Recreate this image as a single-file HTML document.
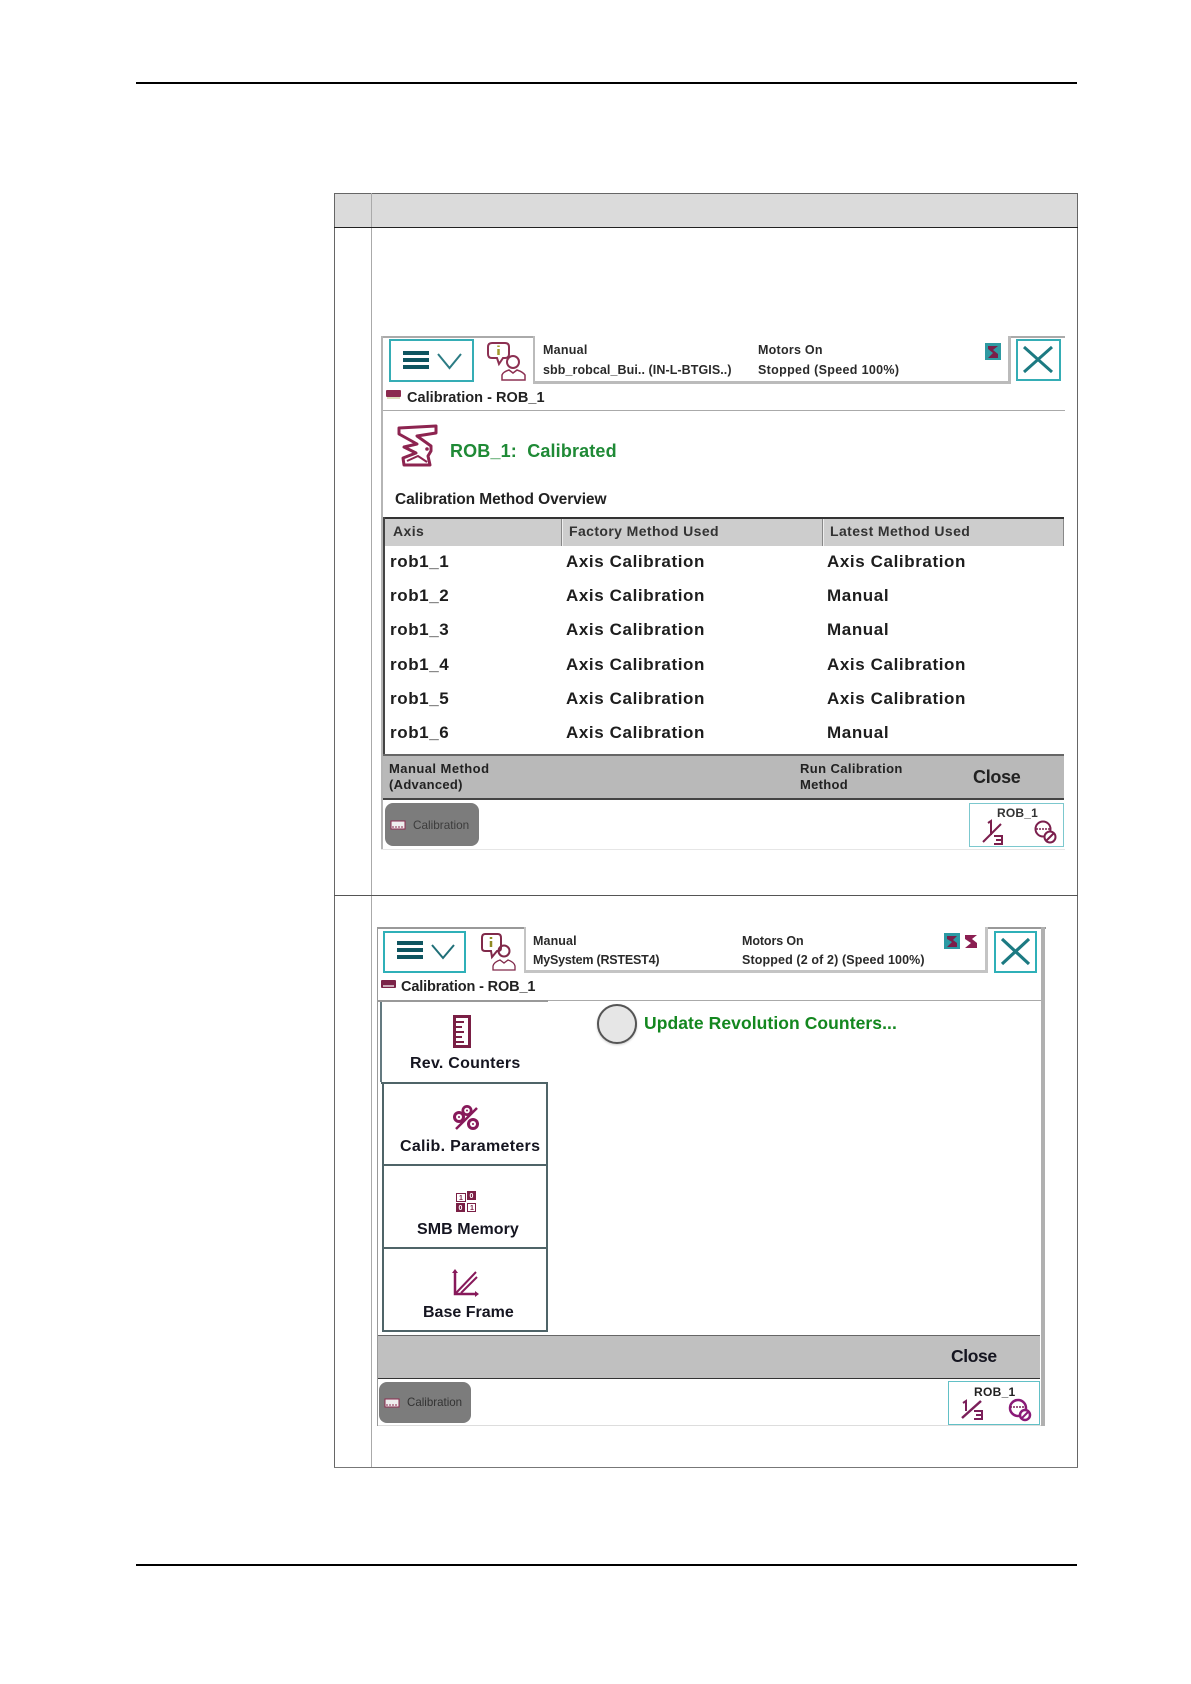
<!DOCTYPE html>
<html><head><meta charset="utf-8"><style>
html,body{margin:0;padding:0;background:#fff}
#p{position:relative;width:1191px;height:1684px;overflow:hidden;background:#fff;font-family:"Liberation Sans",sans-serif}
.r{position:absolute}
.t{position:absolute;white-space:nowrap;font-weight:700;color:#222;line-height:20px}
.s{font-size:12.5px;letter-spacing:.25px;color:#2a2a2a}
.h{font-size:14px;letter-spacing:.4px;color:#333}
.d{font-size:17px;letter-spacing:.6px;color:#1d1d1d}
.b{font-size:16px;letter-spacing:.2px;color:#151520}
svg{position:absolute;left:0;top:0}
</style></head><body><div id="p">
<div class="r" style="left:136px;top:82px;width:941px;height:2px;background:#000"></div>
<div class="r" style="left:136px;top:1564px;width:941px;height:2px;background:#000"></div>

<!-- table -->
<div class="r" style="left:334px;top:193px;width:743px;height:34px;background:#dbdbdb"></div>
<div class="r" style="left:334px;top:193px;width:743px;height:1px;background:#666"></div>
<div class="r" style="left:334px;top:193px;width:1px;height:1275px;background:#666"></div>
<div class="r" style="left:1077px;top:193px;width:1px;height:1275px;background:#666"></div>
<div class="r" style="left:371px;top:193px;width:1px;height:1275px;background:#aaa"></div>
<div class="r" style="left:334px;top:227px;width:744px;height:1px;background:#222"></div>
<div class="r" style="left:334px;top:895px;width:744px;height:1px;background:#555"></div>
<div class="r" style="left:334px;top:1467px;width:744px;height:1px;background:#777"></div>

<!-- screen 1 -->
<div class="r" style="left:381px;top:336px;width:684px;height:2px;background:#aaa"></div>
<div class="r" style="left:381px;top:336px;width:2px;height:514px;background:#b5b5b5"></div>
<div class="r" style="left:381px;top:849px;width:684px;height:1px;background:#e6e6e6"></div>
<div class="r" style="left:533px;top:336px;width:473px;height:45px;border:2px solid #bbb;border-top:0;box-sizing:content-box;background:#fff;border-right-width:3px;border-bottom-width:3px"></div>
<div class="r" style="left:389px;top:339px;width:81px;height:39px;border:2px solid #35adb5"></div>
<div class="r" style="left:1016px;top:339px;width:41px;height:38px;border:2px solid #35adb5"></div>
<div class="t s" style="left:543px;top:340px">Manual</div>
<div class="t s" style="left:543px;top:360px;letter-spacing:.08px">sbb_robcal_Bui.. (IN-L-BTGIS..)</div>
<div class="t s" style="left:758px;top:340px">Motors On</div>
<div class="t s" style="left:758px;top:360px;letter-spacing:.33px">Stopped (Speed 100%)</div>
<div class="t" style="left:407px;top:388px;font-size:14.5px;letter-spacing:.03px">Calibration - ROB_1</div>
<div class="r" style="left:383px;top:410px;width:682px;height:1px;background:#aaa"></div>
<div class="t" style="left:450px;top:441px;font-size:18px;letter-spacing:.15px;color:#1f8a36">ROB_1:&nbsp; Calibrated</div>
<div class="t" style="left:395px;top:490px;font-size:15.500px;letter-spacing:-.08px">Calibration Method Overview</div>

<div class="r" style="left:383px;top:517px;width:681px;height:29px;background:#cdcdcd"></div>
<div class="r" style="left:383px;top:517px;width:681px;height:2px;background:#333"></div>
<div class="r" style="left:383px;top:517px;width:2px;height:240px;background:#444"></div>
<div class="r" style="left:561px;top:519px;width:1px;height:27px;background:#888"></div>
<div class="r" style="left:562px;top:519px;width:1px;height:27px;background:#eee"></div>
<div class="r" style="left:822px;top:519px;width:1px;height:27px;background:#888"></div>
<div class="r" style="left:823px;top:519px;width:1px;height:27px;background:#eee"></div>
<div class="r" style="left:1063px;top:519px;width:1px;height:27px;background:#888"></div>
<div class="t h" style="left:393px;top:521px">Axis</div>
<div class="t h" style="left:569px;top:521px">Factory Method Used</div>
<div class="t h" style="left:830px;top:521px">Latest Method Used</div>

<div class="t d" style="left:390px;top:552px">rob1_1</div><div class="t d" style="left:566px;top:552px">Axis Calibration</div><div class="t d" style="left:827px;top:552px">Axis Calibration</div>
<div class="t d" style="left:390px;top:586px">rob1_2</div><div class="t d" style="left:566px;top:586px">Axis Calibration</div><div class="t d" style="left:827px;top:586px">Manual</div>
<div class="t d" style="left:390px;top:620px">rob1_3</div><div class="t d" style="left:566px;top:620px">Axis Calibration</div><div class="t d" style="left:827px;top:620px">Manual</div>
<div class="t d" style="left:390px;top:655px">rob1_4</div><div class="t d" style="left:566px;top:655px">Axis Calibration</div><div class="t d" style="left:827px;top:655px">Axis Calibration</div>
<div class="t d" style="left:390px;top:689px">rob1_5</div><div class="t d" style="left:566px;top:689px">Axis Calibration</div><div class="t d" style="left:827px;top:689px">Axis Calibration</div>
<div class="t d" style="left:390px;top:723px">rob1_6</div><div class="t d" style="left:566px;top:723px">Axis Calibration</div><div class="t d" style="left:827px;top:723px">Manual</div>

<div class="r" style="left:383px;top:754px;width:681px;height:46px;box-sizing:border-box;background:#b9b9b9;border-top:2px solid #666;border-bottom:2px solid #444"></div>
<div class="t" style="left:389px;top:759px;font-size:13px;letter-spacing:.45px">Manual Method</div>
<div class="t" style="left:389px;top:775px;font-size:13px;letter-spacing:.3px">(Advanced)</div>
<div class="t" style="left:800px;top:759px;font-size:13px;letter-spacing:.4px">Run Calibration</div>
<div class="t" style="left:800px;top:775px;font-size:13px;letter-spacing:.3px">Method</div>
<div class="t" style="left:973px;top:767px;font-size:18px;letter-spacing:-.3px">Close</div>
<div class="r" style="left:385px;top:803px;width:94px;height:43px;border-radius:8px;background:#7c7c7c"></div>
<div class="r" style="left:413px;top:817px;font-size:12px;line-height:16px;color:#3c3c3c;white-space:nowrap;transform:scaleX(.98);transform-origin:left">Calibration</div>
<div class="r" style="left:969px;top:803px;width:93px;height:42px;border:1.500px solid #7cc8ce;background:#fff"></div>
<div class="t" style="left:997px;top:803px;font-size:12px;letter-spacing:.2px;color:#333">ROB_1</div>

<!-- screen 2 -->
<div class="r" style="left:377px;top:927px;width:669px;height:2px;background:#999"></div>
<div class="r" style="left:377px;top:927px;width:1px;height:499px;background:#999"></div>
<div class="r" style="left:1041px;top:927px;width:4px;height:499px;background:#b0b0b0"></div>
<div class="r" style="left:524px;top:927px;width:459px;height:43px;border:2px solid #c4c4c4;border-top:0;border-right-width:3px;border-bottom-width:3px;background:#fff"></div>
<div class="r" style="left:383px;top:931px;width:79px;height:38px;border:2px solid #2fb0b8"></div>
<div class="r" style="left:994px;top:931px;width:39px;height:38px;border:2px solid #2fb0b8"></div>
<div class="t s" style="left:533px;top:931px;letter-spacing:.1px">Manual</div>
<div class="t s" style="left:533px;top:950px;letter-spacing:-.2px">MySystem (RSTEST4)</div>
<div class="t s" style="left:742px;top:931px;letter-spacing:-.1px">Motors On</div>
<div class="t s" style="left:742px;top:950px;letter-spacing:.12px">Stopped (2 of 2) (Speed 100%)</div>
<div class="t" style="left:401px;top:977px;font-size:14.500px;letter-spacing:-.14px">Calibration - ROB_1</div>
<div class="r" style="left:378px;top:1000px;width:663px;height:1px;background:#aaa"></div>
<div class="r" style="left:378px;top:1000px;width:170px;height:2px;background:#999"></div>
<div class="r" style="left:597px;top:1004px;width:40px;height:40px;box-sizing:border-box;border-radius:50%;background:#e6e6e6;border:2px solid #555;box-shadow:0 1px 2px #ccc"></div>
<div class="t" style="left:644px;top:1013px;font-size:17.500px;letter-spacing:.07px;color:#13871f">Update Revolution Counters...</div>

<div class="r" style="left:380px;top:1002px;width:2px;height:80px;background:#647a80"></div>
<div class="r" style="left:381px;top:1082px;width:167px;height:2px;background:#4f6468"></div>
<div class="r" style="left:382px;top:1083px;width:162px;height:81px;border:2px solid #4f6468;border-top:0"></div>
<div class="r" style="left:382px;top:1166px;width:162px;height:81px;border:2px solid #4f6468;border-top:0"></div>
<div class="r" style="left:382px;top:1249px;width:162px;height:81px;border:2px solid #4f6468;border-top:0"></div>
<div class="t b" style="left:410px;top:1054px;letter-spacing:.25px">Rev. Counters</div>
<div class="t b" style="left:400px;top:1137px;letter-spacing:.3px">Calib. Parameters</div>
<div class="t b" style="left:417px;top:1220px;letter-spacing:.05px">SMB Memory</div>
<div class="t b" style="left:423px;top:1303px;letter-spacing:0">Base Frame</div>

<div class="r" style="left:378px;top:1335px;width:662px;height:44px;box-sizing:border-box;background:#c0c0c0;border-top:1px solid #666;border-bottom:1px solid #333"></div>
<div class="t" style="left:951px;top:1346px;font-size:17.500px;letter-spacing:-.4px;color:#151520">Close</div>
<div class="r" style="left:379px;top:1382px;width:92px;height:41px;border-radius:8px;background:#7c7c7c"></div>
<div class="r" style="left:407px;top:1394px;font-size:12px;line-height:16px;color:#333;white-space:nowrap;transform:scaleX(.96);transform-origin:left">Calibration</div>
<div class="r" style="left:948px;top:1381px;width:90px;height:42px;border:1.500px solid #62c0c6;background:#fff"></div>
<div class="t" style="left:974px;top:1382px;font-size:12px;letter-spacing:.3px;color:#222">ROB_1</div>
<div class="r" style="left:378px;top:1425px;width:663px;height:1px;background:#ddd"></div>

<svg width="1191" height="1684" viewBox="0 0 1191 1684" fill="none">
<!-- S1 menu -->
<g fill="#0e5560"><rect x="403" y="351" width="26" height="4"/><rect x="403" y="358" width="26" height="4"/><rect x="403" y="365" width="26" height="4"/></g>
<path d="M438 354 L449.500 368 L461 354" stroke="#2c7c84" stroke-width="2"/>
<!-- S1 info -->
<g stroke="#8c3052" stroke-width="2"><path d="M492 343 H505 Q509 343 509 347 V354 Q509 358 505 358 H503 L499 364 L497 358 H492 Q488 358 488 354 V347 Q488 343 492 343 Z"/><circle cx="513" cy="362" r="6"/><path d="M502 380 V375 Q503 372 509 370 L513 373 L517 370 Q523 372 525 375 V380 Z" stroke-width="1.500"/></g>
<path d="M498.500 349 V355 M498.500 345.500 V347" stroke="#a39a2a" stroke-width="2.500"/>
<!-- S1 status robot -->
<rect x="985" y="343" width="16" height="17" fill="#2f9aa2"/><path d="M988 346 H998 L993 350 L998 354 V358 H988 L993 353 L988 349 Z" fill="#7a1f4a"/>
<!-- S1 X -->
<path d="M1024 347 L1052 372 M1052 347 L1024 372" stroke="#1c7a82" stroke-width="3"/>
<!-- title icons -->
<g><rect x="386" y="390" width="15" height="7" rx="1" fill="#8b2b4f"/><rect x="387" y="397" width="13" height="2" fill="#ddb"/></g>
<g><rect x="381" y="980" width="15" height="8" rx="1" fill="#7b2348"/><path d="M383 986 H394" stroke="#e8d8dd" stroke-width="1.500"/></g>
<!-- big robot -->
<path d="M399 428 L436 426 L436 433 L417 436 L431 446 L431 451 L428 456 L430 465 L404 465 L403 458 L416 453 L404 447 L417 444 L399 434 Z" stroke="#8d2450" stroke-width="3" stroke-linejoin="round"/>
<path d="M407 461 L418 456 L427 462" stroke="#8d2450" stroke-width="2"/><circle cx="427" cy="449" r="1.800" fill="#8d2450"/>
<!-- calibration button icons -->
<g><rect x="391" y="821" width="14" height="8" fill="#eee" stroke="#8b2b4f"/><path d="M393 826 V828 M396 826 V828 M399 826 V828 M402 826 V828" stroke="#8b2b4f"/></g>
<g><rect x="385" y="1399" width="14" height="8" fill="#eee" stroke="#8b2b4f"/><path d="M387 1404 V1406 M390 1404 V1406 M393 1404 V1406 M396 1404 V1406" stroke="#8b2b4f"/></g>
<!-- S1 ROB icons -->
<g stroke="#7b1f4d" stroke-width="2"><path d="M983 842 L1001 824"/><path d="M988 823 L991 821 V835"/><path d="M994 836 H1002 V844 H994 M996 840 H1002"/>
<circle cx="1043" cy="829" r="7.500" stroke-width="2"/><path d="M1036 829 H1050" stroke-dasharray="2 1" stroke-width="1.500"/><circle cx="1050" cy="837" r="5.500" stroke-width="2" fill="#fff"/><path d="M1046 841 L1054 833"/></g>
<!-- S2 menu -->
<g fill="#0e5560"><rect x="397" y="941" width="26" height="4"/><rect x="397" y="948" width="26" height="4"/><rect x="397" y="955" width="26" height="4"/></g>
<path d="M432 945 L443 958 L454 945" stroke="#1f6f78" stroke-width="2"/>
<!-- S2 info -->
<g stroke="#80294a" stroke-width="2"><path d="M485 934 H498 Q501 934 501 938 V948 Q501 951 498 951 H497 L492 957 L491 951 H485 Q482 951 482 948 V938 Q482 934 485 934 Z"/><circle cx="504" cy="951" r="5.500"/><path d="M493 970 V966 Q494 962 500 960 L504 963 L508 960 Q514 962 515 966 V970 Z" stroke-width="1.300"/></g>
<path d="M491 941 V947 M491 937 V939" stroke="#8f8a22" stroke-width="2.500"/>
<!-- S2 status robots -->
<rect x="944" y="933" width="16" height="16" fill="#2b9aa4"/><path d="M947 936 H957 L953 940 L957 943 V947 H947 L952 942 L947 939 Z" fill="#7a1f4a"/>
<path d="M965 935 H977 L972 939 L977 943 V948 H965 L971 943 L965 939 Z" fill="#8b1f52"/>
<!-- S2 X -->
<path d="M1002 939 L1029 964 M1029 939 L1002 964" stroke="#1c7a82" stroke-width="3.200"/>
<!-- ruler -->
<rect x="454.500" y="1016.500" width="15" height="30" fill="#fff" stroke="#7a1f45" stroke-width="3"/><path d="M454 1022 H464 M454 1027 H462 M454 1032 H464 M454 1037 H462 M454 1042 H464" stroke="#7a1f45" stroke-width="2"/>
<!-- gears -->
<g fill="#87195a"><circle cx="459" cy="1117" r="6"/><circle cx="467" cy="1110.500" r="5.500"/><circle cx="473" cy="1124" r="6"/></g>
<g fill="#fff"><circle cx="459" cy="1117" r="3"/><circle cx="467" cy="1110.500" r="2.800"/><circle cx="473" cy="1124" r="3"/></g>
<g fill="#87195a"><circle cx="459" cy="1117" r="1"/><circle cx="467" cy="1110.500" r="1"/><circle cx="473" cy="1124" r="1"/></g>
<path d="M456 1129 L477 1108" stroke="#87195a" stroke-width="2.500"/>
<!-- SMB -->
<g font-family="Liberation Sans" font-size="7" font-weight="700"><rect x="456.500" y="1193.500" width="9" height="8" fill="#fff" stroke="#7a1f45"/><rect x="467" y="1191" width="9" height="9" fill="#7a1f45"/><rect x="456" y="1203" width="9" height="9" fill="#7a1f45"/><rect x="467.500" y="1203.500" width="8" height="8" fill="#fff" stroke="#7a1f45"/><text x="459" y="1200" fill="#7a1f45">1</text><text x="469.500" y="1198" fill="#fff">0</text><text x="458.500" y="1210" fill="#fff">0</text><text x="470" y="1210" fill="#7a1f45">1</text></g>
<!-- base frame -->
<g stroke="#87195a" stroke-width="2.500"><path d="M455 1271 V1294 H477"/><path d="M456 1293 L476 1272 M461 1293 L477 1277" stroke-width="2"/></g><path d="M452 1273 L455 1269 L458 1273 Z M475 1291 L479 1294 L475 1297 Z" fill="#87195a"/>
<!-- S2 ROB icons -->
<g stroke="#7b1f5a" stroke-width="2"><path d="M962 1418 L981 1401" stroke-width="2.500"/><path d="M963 1403 L966 1401 V1411"/><path d="M974 1411 H982 V1419 H974 M976 1415 H982"/>
<circle cx="1018" cy="1408" r="8" stroke-width="2.500" stroke="#8a1a78"/><path d="M1010 1407 H1026" stroke-dasharray="2 1" stroke-width="1.500"/><circle cx="1025" cy="1415" r="5" stroke-width="2.500" fill="#fff" stroke="#8a1a78"/><path d="M1022 1418 L1028 1412" stroke="#8a1a78"/></g>
</svg>
</div></body></html>
